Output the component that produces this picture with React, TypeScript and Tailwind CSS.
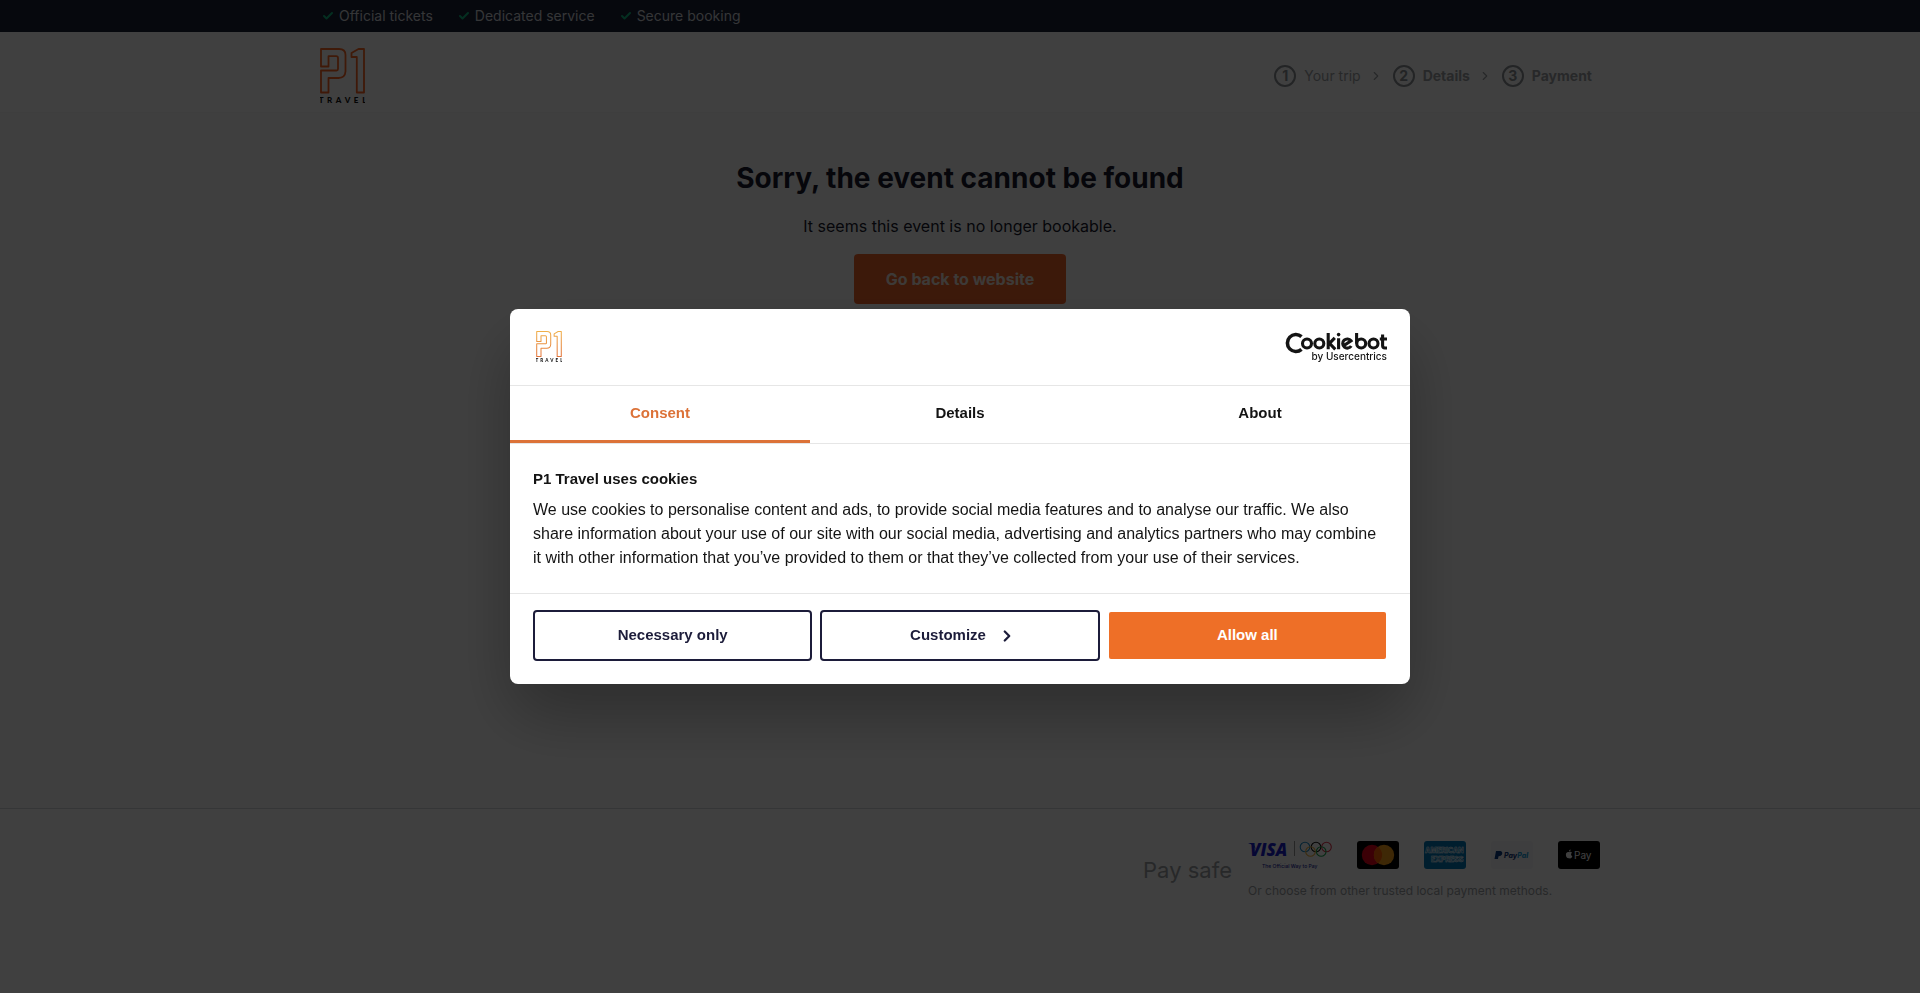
import { useId } from "react";
import { Check, ChevronRight } from "lucide-react";

function P1Logo({ className, from, to }: { className: string; from: string; to: string }) {
  const gradient = useId();
  return (
    <svg viewBox="0 0 45 56" className={className} role="img" aria-label="P1 Travel">
      <defs>
        <linearGradient id={gradient} x1="0" y1="0" x2="0" y2="45" gradientUnits="userSpaceOnUse">
          <stop offset="0" stopColor={from} />
          <stop offset="1" stopColor={to} />
        </linearGradient>
      </defs>
      <g fill="none" stroke={`url(#${gradient})`} strokeWidth="1.8" strokeLinejoin="round">
        <path d="M1 1H19Q25.500 1 25.500 7V23.500Q25 30 18.500 30H8.500V44.500H1V22.500H16.500Q18 22.500 18 21V10Q18 8.200 16.200 8.200H8.500V18.500H1Z" />
        <path d="M38.500 1H44V44.500H36.800V9H31.500V5Z" />
      </g>
      <text x="22.500" y="55" textAnchor="middle" fill="#111" className="font-['Lato',sans-serif] text-[8px] font-black">
        {"TRAVEL".split("").join("\u00a0\u00a0")}
      </text>
    </svg>
  );
}

function CookiebotLogo() {
  return (
    <svg viewBox="0 0 104 32" className="h-8 w-26" role="img" aria-label="Cookiebot by Usercentrics">
      <path d="M17.500 5.600A8.500 8.500 0 1 0 17.500 18.400" fill="none" stroke="#141414" strokeWidth="3.600" />
      <g fill="none" stroke="#141414" strokeWidth="3.100">
        <circle cx="23" cy="12.500" r="4.500" />
        <circle cx="35.300" cy="12.500" r="4.500" />
        <path d="M44.200 2V18.300M50.800 6.800L45.500 12.300L51.300 18.300M54.600 7.200V18.300" />
        <path d="M60 14.500L67 9.800A4.600 4.600 0 1 0 67.200 15" />
        <path d="M72.600 2V12.500" />
        <circle cx="77.200" cy="12.500" r="4.500" />
        <circle cx="89.500" cy="12.500" r="4.500" />
        <path d="M98.600 3.500V14.500Q98.600 17 101 17H103M95.800 8H103" />
      </g>
      <circle cx="54.600" cy="3.600" r="1.800" fill="#141414" />
      <text x="103" y="29" textAnchor="end" fill="#141414" className="font-['Inter',sans-serif] text-[10px] font-medium">
        by Usercentrics
      </text>
    </svg>
  );
}

function VisaOlympics() {
  return (
    <svg viewBox="0 0 84 28" className="h-7 w-21 overflow-visible" role="img" aria-label="Visa, Olympic Games">
      <path d="M0 2H5L8 8L3.500 3.500Z" fill="#1a1fd0" />
      <text x="2" y="14.500" fill="#1a1fd0" className="font-['Open_Sans',sans-serif] text-[17px] font-extrabold italic">VISA</text>
      <path d="M46.500 0V15" stroke="#999" />
      <g fill="none" strokeWidth="1.100">
        <circle cx="57" cy="6" r="4.800" stroke="#1a8bc8" />
        <circle cx="68" cy="6" r="4.800" stroke="#111" />
        <circle cx="78.500" cy="6" r="4.800" stroke="#e5334d" />
        <circle cx="62.500" cy="10.500" r="4.800" stroke="#f0b03c" />
        <circle cx="73.200" cy="10.500" r="4.800" stroke="#16a34a" />
      </g>
      <text x="14" y="27" fill="#1a1f9c" className="font-['Inter',sans-serif] text-[5px] font-medium">The Official Way to Pay</text>
    </svg>
  );
}

function Mastercard() {
  return (
    <svg viewBox="0 0 42 28" className="h-7 w-10.5" role="img" aria-label="Mastercard">
      <rect width="42" height="28" rx="3" fill="#000" />
      <circle cx="15" cy="14" r="10.200" fill="#eb001b" />
      <circle cx="27" cy="14" r="10.200" fill="#f79e1b" />
      <path d="M21 5.800A10.200 10.200 0 0 1 21 22.200A10.200 10.200 0 0 1 21 5.800Z" fill="#ff5f00" />
    </svg>
  );
}

function Amex() {
  return (
    <svg viewBox="0 0 42 28" className="h-7 w-10.5" role="img" aria-label="American Express">
      <rect width="42" height="28" rx="3" fill="#0077b8" />
      <g fill="#0077b8" stroke="#fff" strokeWidth=".5" className="font-['Inter',sans-serif] text-[7px] font-extrabold">
        <text x="1" y="12">AMERICAN</text>
        <text x="7" y="21">EXPRESS</text>
      </g>
    </svg>
  );
}

function PayPal() {
  return (
    <svg viewBox="0 0 42 28" className="h-7 w-10.5" role="img" aria-label="PayPal">
      <rect width="42" height="28" rx="3" fill="#f7f8fa" />
      <path d="M5 10H9.500Q12 10.500 11 13.500Q10 15.500 7.500 15.300L7 18H3.500Z" fill="#0a3a82" />
      <text x="13" y="17" className="font-['Inter',sans-serif] text-[7px] font-extrabold italic">
        <tspan fill="#173a7c">Pay</tspan>
        <tspan fill="#179bd7">Pal</tspan>
      </text>
    </svg>
  );
}

function ApplePay() {
  return (
    <svg viewBox="0 0 42 28" className="h-7 w-10.5" role="img" aria-label="Apple Pay">
      <rect width="42" height="28" rx="3" fill="#000" />
      <path d="M11.200 11.200C12 10.600 13.300 10.700 14 11.700C12.600 12.600 12.800 14.600 14.300 15.200C13.800 16.800 12.800 17.800 11.200 17.200C9.400 17.900 7.900 16 7.900 13.700C7.900 11.600 9.500 10.500 11.200 11.200ZM11 10.500C10.900 9.400 11.700 8.600 12.700 8.500C12.800 9.600 12 10.400 11 10.500Z" fill="#fff" />
      <text x="16" y="17.500" fill="#fff" className="font-['Inter',sans-serif] text-[10px]">Pay</text>
    </svg>
  );
}

const perks = ["Official tickets", "Dedicated service", "Secure booking"];
const steps = ["Your trip", "Details", "Payment"];
const tabs = ["Consent", "Details", "About"];

export default function App() {
  return (
    <div className="flex min-h-screen flex-col bg-white font-['Inter',sans-serif] text-[#181a2c]">
      <div className="bg-[#1a2036]">
        <ul className="mx-auto flex h-8 max-w-7xl items-center gap-[25px] px-0.5 text-sm text-gray-300">
          {perks.map((perk) => (
            <li key={perk} className="flex items-center gap-[5px]">
              <Check className="size-3" color="#10b981" strokeWidth={4} />
              {perk}
            </li>
          ))}
        </ul>
      </div>
      <header className="border-b border-[#f8f8f8]">
        <div className="mx-auto flex h-20 max-w-7xl items-center justify-between pt-2 pr-2">
          <a href="#home">
            <P1Logo className="h-14 w-[45px]" from="#fb6a26" to="#fb5f20" />
          </a>
          <ol className="flex items-center gap-2 text-sm text-[#9da1a5]">
            {steps.map((step, i) => (
              <li key={step} className="flex items-center gap-2">
                {i > 0 && <ChevronRight className="mr-0.5 size-3.5" strokeWidth={2} />}
                <span className="flex size-[22px] items-center justify-center rounded-full border-2 border-[#8b9095] font-bold text-[#8b9095]">
                  {i + 1}
                </span>
                <span className={i === 0 ? "" : "font-bold"}>{step}</span>
              </li>
            ))}
          </ol>
        </div>
      </header>
      <main className="flex flex-1 flex-col items-center bg-[#fcfcfc] pt-[45px]">
        <h1 className="text-[28px] leading-10 font-bold">Sorry, the event cannot be found</h1>
        <p className="mt-4 leading-6">It seems this event is no longer bookable.</p>
        <a href="#website" className="mt-4 flex h-[50px] items-center rounded-sm bg-[#f0642a] px-8 font-bold text-[#f3e6df]">
          Go back to website
        </a>
      </main>
      <footer className="h-[185px] border-t border-gray-300 bg-white">
        <div className="mx-auto flex max-w-7xl items-center justify-end gap-4 pt-8">
          <p className="text-[22px] text-[#9da1a5]">Pay safe</p>
          <div>
            <div className="flex items-center gap-[25px]">
              <VisaOlympics />
              <Mastercard />
              <Amex />
              <PayPal />
              <ApplePay />
            </div>
            <p className="mt-3.5 text-xs text-[#9da1a5]">Or choose from other trusted local payment methods.</p>
          </div>
        </div>
      </footer>

      <div className="fixed inset-0 flex items-center justify-center bg-black/75">
        <section
          role="dialog"
          aria-label="Cookie consent"
          className="w-full max-w-[900px] rounded-lg bg-white font-['Liberation_Sans',sans-serif] text-[15px] text-[#141414] shadow-[0_32px_68px_rgba(0,0,0,0.3)]"
        >
          <div className="flex h-[77px] items-center justify-between border-b border-[#e6e6e6] pr-[22px] pl-6.5">
            <P1Logo className="h-8 w-[26px]" from="#f0b04a" to="#e2733a" />
            <CookiebotLogo />
          </div>
          <div role="tablist" className="grid h-[58px] grid-cols-3 border-b border-[#e6e6e6] font-bold">
            {tabs.map((tab, i) => (
              <button
                key={tab}
                role="tab"
                aria-selected={i === 0}
                className={i === 0 ? "border-b-3 border-[#dc7238] text-[#dc7238]" : "border-b-3 border-transparent"}
              >
                {tab}
              </button>
            ))}
          </div>
          <div className="pt-[23px] pr-7 pb-[23px] pl-[23px]">
            <h2 className="leading-6 font-bold">P1 Travel uses cookies</h2>
            <p className="mt-[7px] text-base leading-6">
              We use cookies to personalise content and ads, to provide social media features and to analyse our traffic. We also
              share information about your use of our site with our social media, advertising and analytics partners who may combine
              it with other information that you’ve provided to them or that they’ve collected from your use of their services.
            </p>
          </div>
          <div className="grid grid-cols-3 items-center gap-2 border-t border-[#e6e6e6] px-[23px] pt-4 pb-[23px] font-bold text-[#1c1c3a]">
            <button className="h-[51px] rounded-sm border-2 border-[#1c1c3a]">Necessary only</button>
            <button className="flex h-[51px] items-center justify-center gap-3 rounded-sm border-2 border-[#1c1c3a] pl-1.5">
              Customize
              <ChevronRight className="size-[18px]" strokeWidth={3} />
            </button>
            <button className="mx-px h-[47px] rounded-xs bg-[#ee6f27] text-white">Allow all</button>
          </div>
        </section>
      </div>
    </div>
  );
}
